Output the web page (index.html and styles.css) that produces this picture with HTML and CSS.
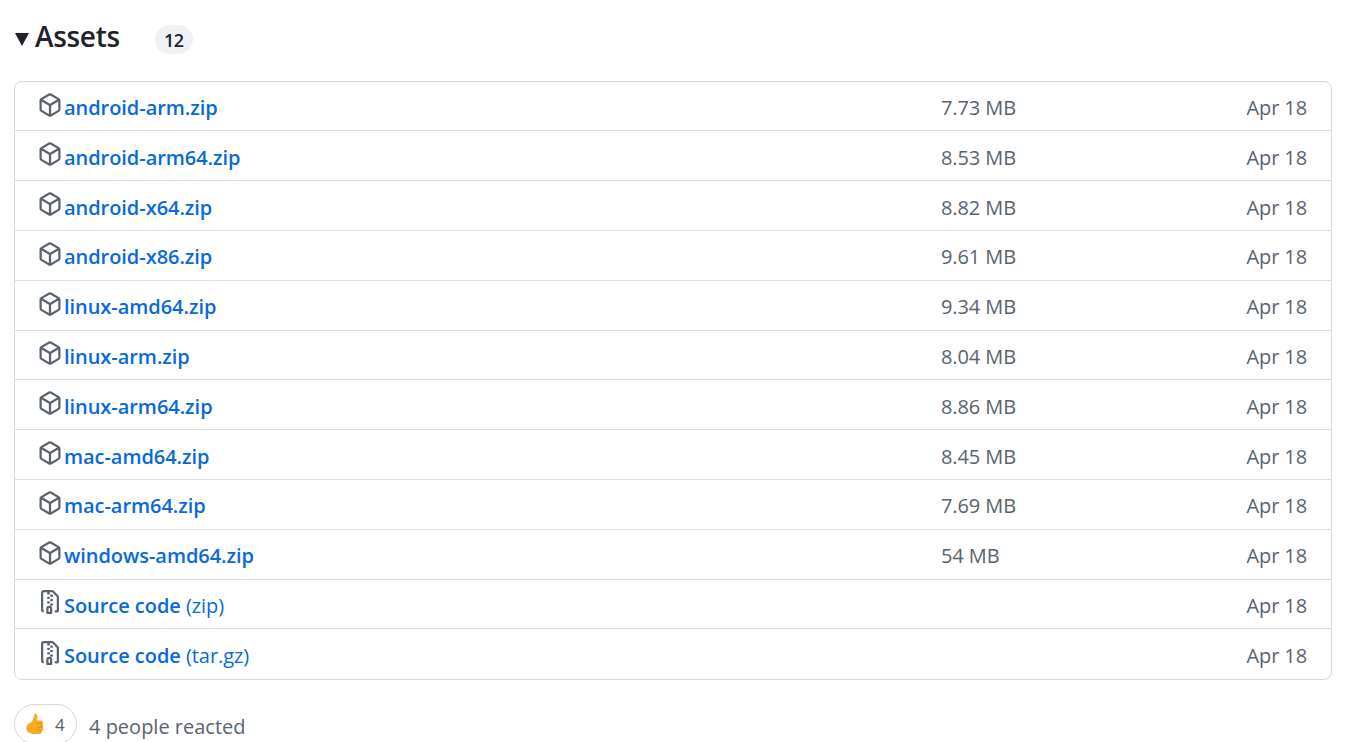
FILE: index.html
```html
<!DOCTYPE html>
<html lang="en">
<head>
<meta charset="utf-8">
<title>Assets</title>
<link rel="stylesheet" href="styles.css">
</head>
<body>
<svg class="defs" width="0" height="0" aria-hidden="true">
  <symbol id="pkg" viewBox="0 0 16 16"><path d="m8.878.392 5.25 3.045c.54.314.872.89.872 1.514v6.098a1.75 1.75 0 0 1-.872 1.514l-5.25 3.045a1.75 1.75 0 0 1-1.756 0l-5.25-3.045A1.75 1.75 0 0 1 1 11.049V4.951c0-.624.332-1.201.872-1.514L7.122.392a1.75 1.75 0 0 1 1.756 0ZM7.875 1.69l-4.63 2.685L8 7.133l4.755-2.758-4.63-2.685a.248.248 0 0 0-.25 0ZM2.5 5.677v5.372c0 .09.047.171.125.216l4.625 2.683V8.432Zm6.25 8.271 4.625-2.683a.25.25 0 0 0 .125-.216V5.677L8.75 8.432Z"/></symbol>
  <symbol id="zip" viewBox="0 0 16 16"><path d="M3.5 1.75v11.5c0 .09.048.173.126.217a.75.75 0 0 1-.752 1.298A1.748 1.748 0 0 1 2 13.25V1.75C2 .784 2.784 0 3.75 0h5.586c.464 0 .909.185 1.237.513l2.914 2.914c.329.328.513.773.513 1.237v8.586A1.75 1.75 0 0 1 12.25 15h-.5a.75.75 0 0 1 0-1.5h.5a.25.25 0 0 0 .25-.25V4.664a.25.25 0 0 0-.073-.177L9.513 1.573a.25.25 0 0 0-.177-.073H7.25a.75.75 0 0 1 0 1.5h-.5a.75.75 0 0 1 0-1.5h-3a.25.25 0 0 0-.25.25Zm3.75 8.75h.5c.966 0 1.75.784 1.75 1.75v3a.75.75 0 0 1-.75.75h-2.5a.75.75 0 0 1-.75-.75v-3c0-.966.784-1.75 1.75-1.75ZM6 5.25a.75.75 0 0 1 .75-.75h.5a.75.75 0 0 1 0 1.5h-.5A.75.75 0 0 1 6 5.25Zm.75 2.25h.5a.75.75 0 0 1 0 1.5h-.5a.75.75 0 0 1 0-1.5ZM8 6.75A.75.75 0 0 1 8.75 6h.5a.75.75 0 0 1 0 1.5h-.5A.75.75 0 0 1 8 6.75ZM8.75 3h.5a.75.75 0 0 1 0 1.5h-.5a.75.75 0 0 1 0-1.5ZM8 9.75A.75.75 0 0 1 8.75 9h.5a.75.75 0 0 1 0 1.5h-.5A.75.75 0 0 1 8 9.75Zm-1 2.5v2.25h1v-2.25a.25.25 0 0 0-.25-.25h-.5a.25.25 0 0 0-.25.25Z"/></symbol>
</svg>
<main class="page">
  <header class="heading">
    <span class="caret"></span>
    <h2 class="title">Assets</h2>
    <span class="counter">12</span>
  </header>
  <ul class="assets">
    <li class="row"><div class="name"><svg class="icon"><use href="#pkg"/></svg><a class="link" href="#">android-arm.zip</a></div><span class="size">7.73 MB</span><span class="date">Apr 18</span></li>
    <li class="row"><div class="name"><svg class="icon"><use href="#pkg"/></svg><a class="link" href="#">android-arm64.zip</a></div><span class="size">8.53 MB</span><span class="date">Apr 18</span></li>
    <li class="row"><div class="name"><svg class="icon"><use href="#pkg"/></svg><a class="link" href="#">android-x64.zip</a></div><span class="size">8.82 MB</span><span class="date">Apr 18</span></li>
    <li class="row"><div class="name"><svg class="icon"><use href="#pkg"/></svg><a class="link" href="#">android-x86.zip</a></div><span class="size">9.61 MB</span><span class="date">Apr 18</span></li>
    <li class="row"><div class="name"><svg class="icon"><use href="#pkg"/></svg><a class="link" href="#">linux-amd64.zip</a></div><span class="size">9.34 MB</span><span class="date">Apr 18</span></li>
    <li class="row"><div class="name"><svg class="icon"><use href="#pkg"/></svg><a class="link" href="#">linux-arm.zip</a></div><span class="size">8.04 MB</span><span class="date">Apr 18</span></li>
    <li class="row"><div class="name"><svg class="icon"><use href="#pkg"/></svg><a class="link" href="#">linux-arm64.zip</a></div><span class="size">8.86 MB</span><span class="date">Apr 18</span></li>
    <li class="row"><div class="name"><svg class="icon"><use href="#pkg"/></svg><a class="link" href="#">mac-amd64.zip</a></div><span class="size">8.45 MB</span><span class="date">Apr 18</span></li>
    <li class="row"><div class="name"><svg class="icon"><use href="#pkg"/></svg><a class="link" href="#">mac-arm64.zip</a></div><span class="size">7.69 MB</span><span class="date">Apr 18</span></li>
    <li class="row"><div class="name"><svg class="icon"><use href="#pkg"/></svg><a class="link" href="#">windows-amd64.zip</a></div><span class="size">54 MB</span><span class="date">Apr 18</span></li>
    <li class="row"><div class="name"><svg class="icon"><use href="#zip"/></svg><a class="link" href="#">Source code <span class="ext">(zip)</span></a></div><span class="size"></span><span class="date">Apr 18</span></li>
    <li class="row"><div class="name"><svg class="icon"><use href="#zip"/></svg><a class="link" href="#">Source code <span class="ext">(tar.gz)</span></a></div><span class="size"></span><span class="date">Apr 18</span></li>
  </ul>
  <footer class="reactions">
    <span class="pill">
      <svg class="thumb" viewBox="0 0 20 24"><path fill="#f8ab22" d="M6.500 10.500C8 8.500 9.300 5.500 9.700 2.500 9.900 1 11 .5 12 1c1.400.7 1.600 2.600 1.300 4.300-.2 1.100-.5 2-.7 2.900h4.200c1.700 0 2.500 1 2.500 2.300 0 .8-.3 1.300-.7 1.700.7.500 1 1.200 1 2 0 .9-.4 1.500-1 1.900.5.500.7 1.100.7 1.800 0 .9-.5 1.600-1.300 2 .2 1.800-.8 3-2.800 3H9.500c-4 0-8-1.500-8.500-6-.3-3 2.500-5.500 5.500-7.400z"/><path fill="#e3810c" d="M13 11.300h5.200c.4 0 .4.800 0 .8H13c-.4 0-.4-.8 0-.8zm0 3.600h5.500c.4 0 .4.800 0 .8H13c-.4 0-.4-.8 0-.8zm0 3.500h4.800c.4 0 .4.800 0 .8H13c-.4 0-.4-.8 0-.8z"/></svg>
      <span class="pill-count">4</span>
    </span>
    <span class="reacted">4 people reacted</span>
  </footer>
</main>
</body>
</html>
```
FILE: styles.css
```css
* { box-sizing: border-box; }
html, body { margin: 0; padding: 0; height: 100%; overflow: hidden; background: #fff; }
body { font-family: "Open Sans", "Noto Sans", sans-serif; color: #1f2328; }
.defs { position: absolute; }
.page { padding: 11px 23px 0 14px; }
.heading { display: flex; align-items: center; height: 70px; padding-bottom: 18px; }
.caret { width: 0; height: 0; margin: 5px 6px 0 1px; border-left: 7px solid transparent; border-right: 7px solid transparent; border-top: 13px solid #1f2328; }
.title { margin: 0 0 3px; font-size: 28px; font-weight: 600; line-height: 40px; letter-spacing: -0.3px; }
.counter { display: flex; align-items: center; justify-content: center; width: 38px; height: 29px; margin: 5px 0 0 35px; border-radius: 15px; background: #eff2f5; font-size: 18px; font-weight: 600; letter-spacing: -0.6px; }
.assets { list-style: none; margin: 0; padding: 0; border: 1px solid #d1d9e0; border-radius: 8px; }
.row { display: flex; align-items: center; height: 49.800px; padding: 3px 24px 0; border-top: 1px solid #d8dee4; font-size: 20px; }
.row:first-child { border-top: 0; height: 48.400px; }
.row:last-child { height: 51px; }
.name { display: flex; align-items: center; width: 902px; flex: none; }
.icon { width: 24px; height: 24px; margin-top: -6px; margin-left: -1px; margin-right: 2px; fill: #59636e; flex: none; }
.link { color: #0969da; font-weight: 600; text-decoration: none; letter-spacing: -0.05px; }
.ext { font-weight: 400; }
.size { color: #59636e; letter-spacing: -0.1px; }
.date { margin-left: auto; color: #59636e; letter-spacing: -0.1px; }
.reactions { display: flex; align-items: center; margin-top: 24px; }
.pill { display: flex; align-items: center; width: 63px; height: 40px; padding-left: 10px; border: 1px solid #d1d9e0; border-radius: 20px; }
.thumb { width: 19px; height: 22px; flex: none; }
.pill-count { margin-left: 11px; color: #59636e; font-size: 17px; }
.reacted { margin-left: 12px; padding-top: 4px; color: #59636e; font-size: 20px; }
```
